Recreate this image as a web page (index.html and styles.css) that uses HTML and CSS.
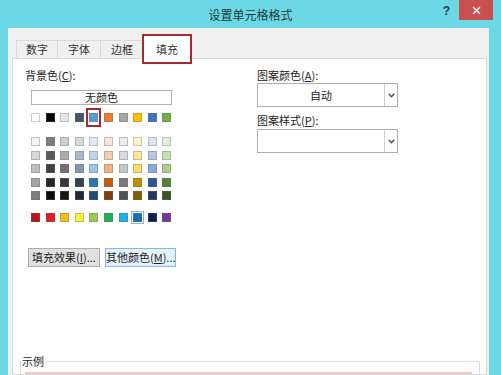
FILE: index.html
```html
<!DOCTYPE html>
<html lang="zh-CN">
<head>
  <meta charset="UTF-8" />
  <title>设置单元格格式</title>
  <link rel="stylesheet" href="styles.css">
</head>
<body>
  <div class="titlebar">
    <span></span>
    <h1 class="title">设置单元格格式</h1>
    <div class="controls">
      <span class="help">?</span>
      <span class="close">
        <svg width="9" height="9" viewBox="0 0 9 9"><path d="M1 1 L8 8 M8 1 L1 8" stroke="#fff" stroke-width="1.4"/></svg>
      </span>
    </div>
  </div>

  <div class="client">
    <div class="tabs">
      <div class="tab first">数字</div>
      <div class="tab">字体</div>
      <div class="tab">边框</div>
      <div class="tab active">填充</div>
    </div>

    <div class="panel">
      <div class="columns">
        <div class="col-left">
          <div class="label">背景色(<u>C</u>):</div>
          <div class="no-color">无颜色</div>

          <div class="swatches">
            <span style="background:#ffffff"></span>
            <span style="background:#000000"></span>
            <span style="background:#e7e6e6"></span>
            <span style="background:#44546a"></span>
            <span class="picked" style="background:#5b9bd5"></span>
            <span style="background:#ed7d31"></span>
            <span style="background:#a5a5a5"></span>
            <span style="background:#ffc000"></span>
            <span style="background:#4472c4"></span>
            <span style="background:#70ad47"></span>
          </div>

          <div class="swatches tints">
            <span style="background:#f2f2f2"></span>
            <span style="background:#7f7f7f"></span>
            <span style="background:#d0cece"></span>
            <span style="background:#d6dce4"></span>
            <span style="background:#deebf6"></span>
            <span style="background:#fbe5d5"></span>
            <span style="background:#ededed"></span>
            <span style="background:#fff2cc"></span>
            <span style="background:#dae3f3"></span>
            <span style="background:#e2efd9"></span>

            <span style="background:#d8d8d8"></span>
            <span style="background:#595959"></span>
            <span style="background:#aeabab"></span>
            <span style="background:#adb9ca"></span>
            <span style="background:#bdd7ee"></span>
            <span style="background:#f7cbac"></span>
            <span style="background:#dbdbdb"></span>
            <span style="background:#fee599"></span>
            <span style="background:#b4c6e7"></span>
            <span style="background:#c5e0b3"></span>

            <span style="background:#bfbfbf"></span>
            <span style="background:#3f3f3f"></span>
            <span style="background:#757070"></span>
            <span style="background:#8496b0"></span>
            <span style="background:#9cc3e5"></span>
            <span style="background:#f4b183"></span>
            <span style="background:#c9c9c9"></span>
            <span style="background:#ffd965"></span>
            <span style="background:#8eaadb"></span>
            <span style="background:#a8d08d"></span>

            <span style="background:#a5a5a5"></span>
            <span style="background:#262626"></span>
            <span style="background:#3a3838"></span>
            <span style="background:#323f4f"></span>
            <span style="background:#2e75b5"></span>
            <span style="background:#c55a11"></span>
            <span style="background:#7b7b7b"></span>
            <span style="background:#bf9000"></span>
            <span style="background:#2f5496"></span>
            <span style="background:#538135"></span>

            <span style="background:#7f7f7f"></span>
            <span style="background:#0c0c0c"></span>
            <span style="background:#171616"></span>
            <span style="background:#222a35"></span>
            <span style="background:#1e4e79"></span>
            <span style="background:#833c0b"></span>
            <span style="background:#525252"></span>
            <span style="background:#7f6000"></span>
            <span style="background:#1f3864"></span>
            <span style="background:#375623"></span>
          </div>

          <div class="swatches standard">
            <span style="background:#b8141c"></span>
            <span style="background:#e21b24"></span>
            <span style="background:#f0bd1c"></span>
            <span style="background:#f8f23a"></span>
            <span style="background:#98c85a"></span>
            <span style="background:#1fae52"></span>
            <span style="background:#1fb0e8"></span>
            <span class="current" style="background:#1470bc"></span>
            <span style="background:#0e1f52"></span>
            <span style="background:#6e369e"></span>
          </div>

          <div class="buttons">
            <div class="btn">填充效果(<u>I</u>)...</div>
            <div class="btn hover">其他颜色(<u>M</u>)...</div>
          </div>
        </div>

        <div class="col-right">
          <div class="label">图案颜色(<u>A</u>):</div>
          <div class="select">
            <span class="value">自动</span>
            <span class="arrow"><svg width="7" height="5" viewBox="0 0 7 5"><path d="M0.8 0.8 L3.5 3.8 L6.2 0.8" fill="none" stroke="#3c4a5a" stroke-width="1.3"/></svg></span>
          </div>
          <div class="label second">图案样式(<u>P</u>):</div>
          <div class="select tight">
            <span class="value"></span>
            <span class="arrow"><svg width="7" height="5" viewBox="0 0 7 5"><path d="M0.8 0.8 L3.5 3.8 L6.2 0.8" fill="none" stroke="#3c4a5a" stroke-width="1.3"/></svg></span>
          </div>
        </div>
      </div>

      <fieldset class="sample">
        <legend>示例</legend>
        <div class="sample-box"></div>
      </fieldset>
    </div>
  </div>
</body>
</html>
```

FILE: styles.css
```css
* {
  box-sizing: border-box;
}

body {
  margin: 0;
  width: 501px;
  height: 375px;
  overflow: hidden;
  background: #6dd8e5;
  font-family: "Noto Sans CJK SC", "Noto Sans", sans-serif;
  font-size: 11px;
  color: #222;
}

u {
  text-decoration: underline;
}

/* title bar */
.titlebar {
  height: 28px;
  display: grid;
  grid-template-columns: 1fr auto 1fr;
  align-items: start;
}

.title {
  margin: 0;
  font-size: 12px;
  font-weight: normal;
  line-height: 29px;
  color: #24383c;
}

.controls {
  display: flex;
  justify-content: flex-end;
  align-items: flex-start;
  padding-right: 8px;
}

.help {
  font-family: "Liberation Sans", sans-serif;
  font-weight: bold;
  font-size: 12px;
  line-height: 22px;
  color: #1d3a55;
  margin-right: 9px;
}

.close {
  width: 34px;
  height: 20px;
  background: #c94f50;
  display: flex;
  align-items: center;
  justify-content: center;
}

/* dialog body */
.client {
  margin-left: 8px;
  width: 481px;
  height: 347px;
  background: #f0f0f0;
  padding: 7px 2px 0 4px;
}

.tabs {
  display: flex;
  align-items: flex-end;
  height: 23px;
  padding-left: 4px;
  position: relative;
  z-index: 1;
}

.tab {
  height: 18px;
  line-height: 17px;
  padding: 0 10px;
  border: 1px solid #d9d9d9;
  border-bottom: none;
  background: #f0f0f0;
  color: #333;
  margin-right: -1px;
}

.tab.first {
  padding: 0 9px;
}

.tab.active {
  height: 24px;
  margin-bottom: -1px;
  padding: 5px 12px 0;
  line-height: 17px;
  background: #fff;
  position: relative;
}

.tab.active::after {
  content: "";
  position: absolute;
  top: -2px;
  left: -2px;
  right: -2px;
  bottom: -5px;
  border: 2px solid #a52a30;
}

.panel {
  height: 317px;
  overflow: hidden;
  background: #fff;
  border: 1px solid #d9d9d9;
  padding: 9px 6px 0 7px;
}

.columns {
  display: grid;
  grid-template-columns: 237px 142px;
}

.col-left {
  padding-left: 5px;
}

.label {
  line-height: 14px;
  color: #222;
}

.no-color {
  margin: 8px 0 0 6px;
  width: 141px;
  height: 15px;
  line-height: 13px;
  border: 1px solid #b4b4b4;
  text-align: center;
}

.swatches {
  display: grid;
  grid-template-columns: repeat(10, 9px);
  column-gap: 5.6px;
  row-gap: 4.6px;
  margin: 8px 0 0 6px;
}

.swatches span {
  height: 9px;
  border: 1px solid rgba(110, 110, 110, 0.35);
  position: relative;
}

.swatches.tints {
  margin-top: 15px;
}

.swatches.standard {
  margin-top: 13px;
}

.picked::after {
  content: "";
  position: absolute;
  top: -6px;
  bottom: -6px;
  left: -4px;
  right: -4px;
  border: 2px solid #9e2a33;
}

.current::after {
  content: "";
  position: absolute;
  top: -3px;
  bottom: -3px;
  left: -3px;
  right: -3px;
  border: 1px solid #90b3d3;
}

.buttons {
  display: flex;
  gap: 5px;
  margin: 26px 0 0 3px;
}

.btn {
  height: 19px;
  line-height: 17px;
  border: 1px solid #adadad;
  background: #e1e1e1;
  text-align: center;
  width: 72px;
  white-space: nowrap;
}

.btn.hover {
  width: 71px;
  background: #e5f1fb;
  border-color: #85b6e2;
}

.col-right .select {
  margin-top: 1px;
  width: 141px;
  height: 24px;
  display: flex;
  border: 1px solid #abadb3;
  background: #fff;
}

.col-right .select.tight {
  margin-top: 2px;
}

.label.second {
  margin-top: 6px;
}

.select .value {
  flex: 1;
  text-align: center;
  line-height: 22px;
}

.select .arrow {
  width: 13px;
  border-left: 1px solid #d0d0d0;
  display: flex;
  align-items: center;
  justify-content: center;
}

/* sample group */
.sample {
  margin: 87px 0 0;
  padding: 0;
  border: 1px solid #dcdcdc;
  min-width: 0;
}

.sample legend {
  padding: 0 1px;
  line-height: 14px;
  color: #222;
}

.sample-box {
  margin: 4px 7px 0 4px;
  height: 10px;
  border-top: 2px solid #f5c4cb;
  background: #fdf4f5;
}
```
